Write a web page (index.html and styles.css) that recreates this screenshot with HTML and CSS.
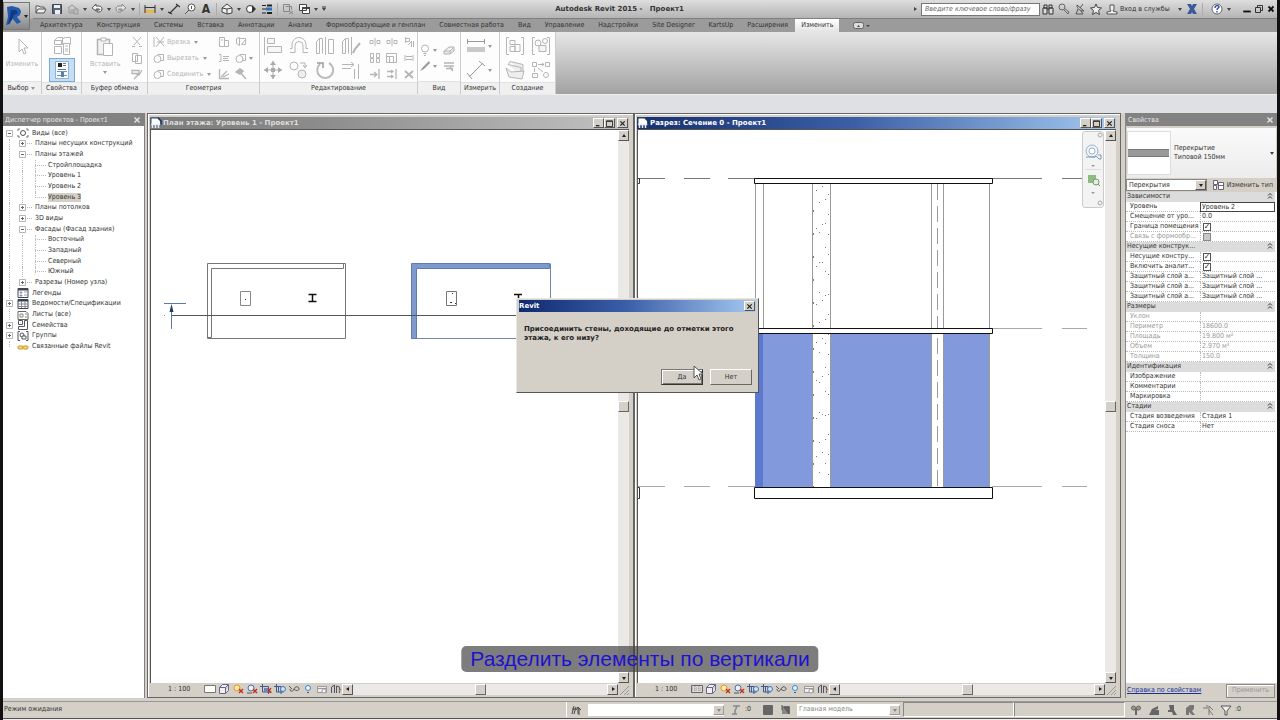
FILE: index.html
```html
<!DOCTYPE html>
<html lang="ru">

<head>
    <meta charset="UTF-8">
    <meta name="viewport" content="width=device-width, initial-scale=1.0">
    <title>Autodesk Revit 2015 - Проект1</title>
    <link rel="stylesheet" href="styles.css">
</head>

<body>
    <svg class="sprite" aria-hidden="true">
        <symbol id="down" viewBox="0 0 6 6"><path d="M1 2h4L3 5z" fill="currentColor"/></symbol>
        <symbol id="up" viewBox="0 0 6 6"><path d="M1 4h4L3 1z" fill="currentColor"/></symbol>
        <symbol id="left" viewBox="0 0 6 6"><path d="M4 1v4L1 3z" fill="currentColor"/></symbol>
        <symbol id="right" viewBox="0 0 6 6"><path d="M2 1v4l3-2z" fill="currentColor"/></symbol>
        <symbol id="cross" viewBox="0 0 8 8"><path d="M1.500 1.500l5 5M6.500 1.500l-5 5" stroke="currentColor" stroke-width="1.400"/></symbol>
        <symbol id="min" viewBox="0 0 8 8"><path d="M1 6.500h4" stroke="currentColor" stroke-width="1.500"/></symbol>
        <symbol id="max" viewBox="0 0 8 8"><path d="M.5 1h7v6.500h-7zM.5 1.500h7" stroke="currentColor" fill="none"/></symbol>
        <symbol id="chev" viewBox="0 0 6 8"><path d="M1 3.500l2-2 2 2M1 6.500l2-2 2 2" stroke="#333" fill="none"/></symbol>
        <symbol id="doc" viewBox="0 0 12 12"><path d="M1 1h8l2 3v4H1z" fill="#fff" stroke="#2a4a7c"/><path d="M1 7.500h9M2.500 8v3M5.500 8v3M8.500 8v3" stroke="#e8eef8" stroke-width="1.500"/><path d="M8 1l3 3v3" stroke="#16365f" stroke-width="1.500" fill="none"/></symbol>
        <symbol id="plus" viewBox="0 0 7 7"><path d="M.5.5h6v6h-6z" fill="#fff" stroke="#b5b5b5"/><path d="M2 3.500h3M3.500 2v3" stroke="#666"/></symbol>
        <symbol id="minus" viewBox="0 0 7 7"><path d="M.5.5h6v6h-6z" fill="#fff" stroke="#b5b5b5"/><path d="M2 3.500h3" stroke="#666"/></symbol>
        <!-- view control bar -->
        <symbol id="v-scale" viewBox="0 0 12 10"><path d="M.5 1.500h11v7H.5z" fill="#fff" stroke="#777"/></symbol>
        <symbol id="v-mesh" viewBox="0 0 12 10"><path d="M.5 1.500h11v7H.5z" fill="#ddd" stroke="#666"/><path d="M1 4h10M1 6h10M4 2v6M8 2v6" stroke="#999" stroke-dasharray="1 1"/></symbol>
        <symbol id="v-cube" viewBox="0 0 12 10"><path d="M1.500 3.500h6v6h-6zM1.500 3.500l3-3h6l-3 3M10.500.5v6l-3 3" fill="#eee" stroke="#666688"/></symbol>
        <symbol id="v-sun" viewBox="0 0 12 10"><circle cx="5" cy="4" r="3" fill="#ffe9a0" stroke="#e09a20"/><path d="M7 5l4 4M11 5L7 9" stroke="#c03020" stroke-width="1.400"/></symbol>
        <symbol id="v-shadow" viewBox="0 0 12 10"><circle cx="5" cy="4" r="3" fill="#e8f1fb" stroke="#4a6fa5"/><path d="M1 9h5" stroke="#555"/><path d="M7 5l4 4M11 5L7 9" stroke="#c03020" stroke-width="1.400"/></symbol>
        <symbol id="v-crop" viewBox="0 0 12 10"><path d="M2.500 0v8h9M0 2.500h8.500V10" fill="none" stroke="#44598a"/><path d="M4 4h4v4H4z" fill="#6a87b8"/><path d="M8 4l3 5M11 4L8 9" stroke="#c03020" stroke-width="1.300"/></symbol>
        <symbol id="v-cropv" viewBox="0 0 12 10"><path d="M2.500 0v8h7M0 2.500h7V10M4.500 3v5" fill="none" stroke="#44598a"/><circle cx="9" cy="5" r="2.500" fill="#cfe4fa" stroke="#3b78bb"/></symbol>
        <symbol id="v-glass" viewBox="0 0 12 10"><path d="M1 2l3 3M2 5c0 3 3 3 4 0 1-3 5-3 5 0 0 2-4 2-5 0" fill="none" stroke="#555"/></symbol>
        <symbol id="v-bulb" viewBox="0 0 12 10"><circle cx="6" cy="4" r="2.500" fill="#e6f4ff" stroke="#3b88cc"/><path d="M5 8.500h2" stroke="#555"/></symbol>
        <symbol id="v-temp" viewBox="0 0 12 10"><path d="M1.500 2.500h9v6h-9zM1.500 4.500h9" fill="#eee" stroke="#999"/><circle cx="8" cy="7" r="2" fill="#fff" stroke="#999"/></symbol>
        <symbol id="v-analyt" viewBox="0 0 12 10"><path d="M1.500 9V3l3-2v8M6.500 9V2l3 1v6" fill="#c3cbe0" stroke="#555"/><path d="M9 7l2-2" stroke="#d07a30" stroke-width="1.500"/></symbol>
        <!-- ribbon -->
        <symbol id="r-cut" viewBox="0 0 12 12"><path d="M2 1l7 8M10 1L3 9M1 10.500h3M8 10.500h3" fill="none" stroke="currentColor"/></symbol>
        <symbol id="r-copy" viewBox="0 0 12 12"><path d="M1.500 1.500h5v8h-5zM4.500 3.500h6v8h-6z" fill="#fff" stroke="currentColor"/></symbol>
        <symbol id="r-brush" viewBox="0 0 12 12"><path d="M1 2.500h7v3H1zM5 6l3 1 3-5M3 11l4-4" fill="none" stroke="currentColor" stroke-width="1.300"/></symbol>
        <symbol id="r-cope" viewBox="0 0 12 12"><path d="M1 1v10M3 1l8 9M11 1L3 11M4 6h7" fill="none" stroke="currentColor"/></symbol>
        <symbol id="r-join" viewBox="0 0 12 12"><circle cx="4.500" cy="7" r="3.500" fill="none" stroke="currentColor"/><path d="M4.500 2.500h6v6h-3" fill="none" stroke="currentColor"/></symbol>
        <symbol id="r-wall" viewBox="0 0 12 12"><path d="M1.500 1.500h5v9h-5zM6.500 4.500h4v6h-4M3 4h2" fill="none" stroke="currentColor"/></symbol>
        <symbol id="r-face" viewBox="0 0 12 12"><path d="M1.500 2.500l3-1v8l-3-2zM4.500 2.500h6v6h-4l4-5" fill="none" stroke="currentColor"/></symbol>
        <symbol id="r-beam" viewBox="0 0 12 12"><path d="M1 2.500h2v7H1M5 4.500h6M5 8.500h6M5 6.500h5" fill="none" stroke="currentColor"/></symbol>
        <symbol id="r-split" viewBox="0 0 12 12"><path d="M1.500 1v9.500H11M3 9l6-6M5 9l6-3" fill="none" stroke="currentColor" stroke-width="1.300"/></symbol>
        <symbol id="r-hammer" viewBox="0 0 12 12"><path d="M1 4l4-3 3 2-3 3zM5 4l6 7" fill="currentColor" stroke="currentColor" stroke-width="1.500"/></symbol>
        <symbol id="r-gap" viewBox="0 0 12 12"><path d="M1 4.500h3v3H1zM8 4.500h3v3H8zM6 2v8" fill="none" stroke="currentColor"/></symbol>
        <symbol id="r-array" viewBox="0 0 12 12"><path d="M1.500 1.500h3v4h-3zM7.500 1.500h3v4h-3zM1.500 6.500h3v4h-3zM7.500 6.500h3v4h-3z" fill="none" stroke="currentColor"/></symbol>
        <symbol id="r-scale" viewBox="0 0 12 12"><path d="M.5 1.500h10v9H.5zM3.500 4.500h4v6M.5 4.500h3v6" fill="none" stroke="currentColor"/></symbol>
        <symbol id="r-pin" viewBox="0 0 12 12"><path d="M2.500 1v6M2.500 2.500h4v3h-4M8.500 5v6M10.500 5v6M5 9l3-3" fill="none" stroke="currentColor"/></symbol>
        <symbol id="r-unpin" viewBox="0 0 12 12"><path d="M2 3v6M10 3v6M3 4.500h6M3 7.500h6" fill="none" stroke="currentColor"/></symbol>
        <symbol id="r-trim1" viewBox="0 0 12 12"><path d="M1 6.500h6M5 4l3 2.500L5 9M10 1v10" fill="none" stroke="currentColor" stroke-width="1.300"/></symbol>
        <symbol id="r-trim2" viewBox="0 0 12 12"><path d="M1 3.500h6M1 8.500h6M5 2l2 1.500L5 5M5 7l2 1.500L5 10M10 1v10" fill="none" stroke="currentColor" stroke-width="1.300"/></symbol>
        <symbol id="r-del" viewBox="0 0 12 12"><path d="M2 3l8 7M10 3l-8 7" stroke="currentColor" stroke-width="2"/></symbol>
        <symbol id="r-arrow" viewBox="0 0 20 20"><path d="M7 2v13l3-3 2 5 2-1-2-5h4z" fill="#fff" stroke="currentColor"/></symbol>
        <symbol id="r-types" viewBox="0 0 20 20"><path d="M2.500 4.500l3-3h5v7h-8zM2.500 10.500h7v7h-7zM10.500 2.500l3-1h5v7M2.500 4.500h7v4" fill="#fff" stroke="currentColor"/><path d="M11.500 7.500h6v11h-6zM13 10h3M13 13h3M13 15h3" fill="#fff" stroke="currentColor"/></symbol>
        <symbol id="r-props" viewBox="0 0 20 20"><path d="M3.500 1.500h13v17h-13z" fill="#f4faff" stroke="#8fb2d2"/><path d="M6 3h4v4H6z" fill="#222"/><path d="M11 3.500h3M11 5.500h3M6 9.500h8" stroke="#777"/><path d="M5 11.500h10M5 15.500h10" stroke="#6a97c4"/><path d="M9 12h3v5H9z" fill="#5f7f9f"/></symbol>
        <symbol id="r-paste" viewBox="0 0 20 20"><path d="M2.500 2.500h12v15h-12z" fill="#f3f3f3" stroke="currentColor" stroke-width="1.500"/><path d="M6 1h5v3H6z" fill="#fff" stroke="currentColor"/><path d="M8.500 6.500h9v12h-9z" fill="#fff" stroke="currentColor"/></symbol>
        <symbol id="r-align" viewBox="0 0 20 20"><path d="M1.500 1v18M4.500 2.500h7v5h-7zM4.500 10.500h14v6h-14z" fill="#f7f7f7" stroke="currentColor"/></symbol>
        <symbol id="r-offset" viewBox="0 0 20 20"><path d="M1 16.500h5v-7a4 4 0 0 1 8 0v7h5M1 12.500h2v-4a7 7 0 0 1 14 0v4h2" fill="none" stroke="currentColor"/></symbol>
        <symbol id="r-mirror" viewBox="0 0 20 20"><path d="M1.500 5.500l3-3v15h-3zM4.500 2.500h3v15M10.500 1v18M13.500 3.500h5v14h-5z" fill="none" stroke="currentColor"/></symbol>
        <symbol id="r-mirror2" viewBox="0 0 20 20"><path d="M1.500 5.500l3-3v15h-3zM4.500 2.500h3v15M10.500 1v18" fill="none" stroke="currentColor"/><path d="M12 17l2-4 5-6" fill="none" stroke="currentColor" stroke-width="2"/></symbol>
        <symbol id="r-move" viewBox="0 0 20 20"><path d="M10 1v18M1 10h18" stroke="#aaa"/><path d="M7 5l3-4 3 4zM7 15l3 4 3-4zM5 7l-4 3 4 3zM15 7l4 3-4 3zM8 8h4v4H8z" fill="#aaa"/></symbol>
        <symbol id="r-cp" viewBox="0 0 20 20"><circle cx="5" cy="6" r="4" fill="none" stroke="currentColor"/><circle cx="13" cy="14" r="4" fill="#eee" stroke="currentColor"/><path d="M11 3h5v4M14 5l2 3 2-3" fill="none" stroke="currentColor"/></symbol>
        <symbol id="r-rotate" viewBox="0 0 20 20"><path d="M5 4a8 8 0 1 0 9-1" fill="none" stroke="#bbb" stroke-width="2"/><path d="M2 3h6v5" fill="none" stroke="#999" stroke-width="1.500"/></symbol>
        <symbol id="r-corner" viewBox="0 0 20 20"><path d="M1 4.500h12M1 8.500h9M13.500 9v10M17.500 4v15M10 2l3 2.500L10 7" fill="none" stroke="currentColor"/></symbol>
        <symbol id="r-bulb" viewBox="0 0 12 12"><circle cx="6" cy="4.500" r="3.500" fill="#fff" stroke="currentColor"/><path d="M4.500 9.500h3M5 11.500h2" stroke="currentColor"/></symbol>
        <symbol id="r-eraser" viewBox="0 0 12 12"><path d="M1 7l5-4h5v4L7 10H1zM1 7h6l4-4M7 7v3" fill="#e5e5e5" stroke="currentColor"/></symbol>
        <symbol id="r-lines" viewBox="0 0 12 12"><path d="M1 3h10M1 6h10M3 8.500h7M7 7l3 4" stroke="currentColor" stroke-width="1.500"/></symbol>
        <symbol id="r-pen" viewBox="0 0 12 12"><path d="M1 11l3-4 6-6 1 2-6 6z" fill="#999"/></symbol>
        <symbol id="r-ruler" viewBox="0 0 20 20"><path d="M1 5.500h18M1.500 3v5M18.500 3v5" stroke="#999"/><path d="M1 11h18v5H1z" fill="#c9c9c9"/></symbol>
        <symbol id="r-dist" viewBox="0 0 20 20"><path d="M3 17L17 3M1 13l5 6M13 1l6 5" stroke="#999"/></symbol>
        <symbol id="r-group" viewBox="0 0 20 20"><path d="M4 1.500H1.500v17H4M16 1.500h2.500v17H16M5 4.500h5v4H5zM5 10.500h5v5H5zM10 8.500h5v7h-5z" fill="none" stroke="currentColor"/></symbol>
        <symbol id="r-group2" viewBox="0 0 20 20"><path d="M4 1.500H1.500v17H4M16 1.500h2.500v17H16" fill="none" stroke="currentColor"/><circle cx="7" cy="7" r="3" fill="none" stroke="currentColor"/><circle cx="14" cy="5" r="2.500" fill="none" stroke="currentColor"/><path d="M8 9.500h7v6H8z" fill="#f5f5f5" stroke="currentColor"/></symbol>
        <symbol id="r-assem" viewBox="0 0 20 20"><path d="M5 1.500l13 3v8M3 5l2-3.500M3 4.500l13 3v8" fill="#eee" stroke="currentColor"/><path d="M1 8l3 9 13 2 2-8-13 1z" fill="#eee" stroke="currentColor"/></symbol>
        <symbol id="r-similar" viewBox="0 0 20 20"><path d="M1.500 2.500h4v4h-4zM14.500 2.500h4v4h-4zM1.500 13.500h5v4h-5zM7 4.500h6M11 3l2 1.500L11 6M3.500 8v4M7 8l5 4" fill="none" stroke="currentColor"/><circle cx="15" cy="15" r="2.500" fill="none" stroke="currentColor"/></symbol>
    </svg>

    <header class="head">
        <button class="app" aria-label="Меню приложения">
            <svg width="26" height="26" viewBox="0 0 26 26"><path d="M3 4l5-1 7 2 2 3-1 4-3 2 4 5-4 2-5-6-2 6-4 1 2-8z" fill="#2459ad"/><path d="M7 7l5 0 2 3-4 2-2 5-4 4 2-8z" fill="#123a82"/><path d="M20 12h4l-2 3z" fill="#222"/></svg>
        </button>
        <div class="quick">
            <button aria-label="Открыть"><svg width="12" height="12" viewBox="0 0 12 12"><path d="M1 10V3h3l1 1h4v2M1 10l2-4h8l-2 4z" fill="#eee" stroke="#555"/></svg></button>
            <button aria-label="Сохранить"><svg width="12" height="12" viewBox="0 0 12 12"><path d="M1.500 1.500h9v9h-9z" fill="#5a6575" stroke="#3c4654"/><path d="M3 2h6v3H3zM4 7h5v4H4z" fill="#eee"/></svg></button>
            <button aria-label="Синхронизация"><svg width="12" height="12" viewBox="0 0 12 12"><path d="M1 5l4-3 4 3v5H2V5M4 10V7h2v3" fill="#ccc" stroke="#999"/><path d="M7 6h4v5H7z" fill="#bbb" stroke="#999"/></svg></button>
            <svg class="dd"><use href="#down"/></svg>
            <button aria-label="Отменить"><svg width="12" height="12" viewBox="0 0 12 12"><path d="M1 5l4-4v2h3c4 0 4 6 0 6H6V7h2c1 0 1-1 0-1H5v2z" fill="#f4f4f4" stroke="#555"/></svg></button>
            <svg class="dd"><use href="#down"/></svg>
            <button aria-label="Повторить"><svg width="12" height="12" viewBox="0 0 12 12"><path d="M11 5L7 1v2H4C0 3 0 9 4 9h2V7H4C3 7 3 6 4 6h3v2z" fill="#e2e2e2" stroke="#888"/></svg></button>
            <svg class="dd"><use href="#down"/></svg>
            <i class="qsep"></i>
            <button aria-label="Измерить"><svg width="12" height="12" viewBox="0 0 12 12"><path d="M1 7h10v3H1z" fill="#e8b84a"/><path d="M1 4.500h10M1 2v8M11 2v8" stroke="#333"/></svg></button>
            <svg class="dd"><use href="#down"/></svg>
            <button aria-label="Размер"><svg width="12" height="12" viewBox="0 0 12 12"><path d="M2 10l8-8M0 9l4 2M8 1l4 3" stroke="#333" stroke-width="1.200"/></svg></button>
            <button aria-label="Марка"><svg width="12" height="12" viewBox="0 0 12 12"><circle cx="7.500" cy="4.500" r="3.500" fill="#fff" stroke="#555"/><path d="M1 11l4-4M7.500 3v3" stroke="#555"/></svg></button>
            <button class="letter" aria-label="Текст">A</button>
            <i class="qsep"></i>
            <button aria-label="3D вид"><svg width="12" height="12" viewBox="0 0 12 12"><path d="M1 5l5-4 5 4v5l-5 1-5-2z" fill="#eee" stroke="#444"/><path d="M1 5l5 1 5-1M6 6v5" stroke="#444" fill="none"/></svg></button>
            <svg class="dd"><use href="#down"/></svg>
            <button aria-label="Разрез"><svg width="12" height="12" viewBox="0 0 12 12"><circle cx="5" cy="6" r="3.500" fill="#fff" stroke="#333"/><path d="M7 2l4 4-4 4z" fill="#333"/></svg></button>
            <button aria-label="Тонкие линии"><svg width="12" height="12" viewBox="0 0 12 12"><path d="M1 2.500h4M1 6h4M1 10h4" stroke="#222"/><path d="M6 2.500h5M6 10h5" stroke="#222" stroke-width="2"/><path d="M5 6h6" stroke="#2d6fc0" stroke-width="3"/></svg></button>
            <i class="qsep"></i>
            <button aria-label="Закрыть скрытые"><svg width="12" height="12" viewBox="0 0 12 12"><path d="M1.500 1.500h6v7h-6zM3.500 3.500h6v3M7 8l4 3M11 8l-4 3" fill="none" stroke="#888"/></svg></button>
            <button aria-label="Переключить окна"><svg width="12" height="12" viewBox="0 0 12 12"><path d="M1.500 1.500h7v6h-7zM4.500 4.500h7v6h-7z" fill="#fff" stroke="#444"/><path d="M4 5h8" stroke="#444" stroke-width="2"/></svg></button>
            <svg class="dd"><use href="#down"/></svg>
            <svg class="dd wide"><use href="#down"/><path d="M1 1h4" stroke="#333"/></svg>
            <h1 class="apptitle">Autodesk Revit 2015 - &nbsp; Проект1</h1>
            <div class="info">
                <svg class="dd"><use href="#right"/></svg>
                <input class="search" type="text" aria-label="Поиск" placeholder="Введите ключевое слово/фразу">
                <button aria-label="Найти"><svg width="12" height="12" viewBox="0 0 12 12"><path d="M2 2h3v3H2zM7 2h3v3H7zM1 5h4v6H1zM7 5h4v6H7zM5 6h2" fill="#ddd" stroke="#333"/></svg></button>
                <button aria-label="Подписка"><svg width="12" height="12" viewBox="0 0 12 12"><circle cx="4" cy="4" r="3" fill="none" stroke="#666"/><path d="M5 6l5 5 1-2-5-4" fill="none" stroke="#666"/></svg></button>
                <button aria-label="Связь"><svg width="12" height="12" viewBox="0 0 12 12"><path d="M3 2c0 4 3 6 7 6M3 2l7 6M6 5l3-4M4 6l-2 5h7L7 8" fill="none" stroke="#555"/></svg></button>
                <button aria-label="Избранное"><svg width="12" height="12" viewBox="0 0 12 12"><path d="M6 1l1.500 3.500 4 .5-3 2.500 1 4L6 9.500l-3.500 2 1-4-3-2.500 4-.5z" fill="#eee" stroke="#444"/></svg></button>
                <button aria-label="Профиль"><svg width="12" height="12" viewBox="0 0 12 12"><path d="M4 2h4v4l-1 2 4 1v2H1V9l4-1-1-2z" fill="#eee" stroke="#555"/></svg></button>
                <a class="signin" href="#">Вход в службы</a>
                <svg class="dd"><use href="#down"/></svg>
                <button class="exch" aria-label="Exchange"><svg width="12" height="12" viewBox="0 0 12 12"><path d="M1 1h4l1 2 1-2h4L8 6l3 5H7L6 9l-1 2H1l3-5z" fill="#3a5a9a"/></svg></button>
                <i class="qsep"></i>
                <button class="help" aria-label="Справка"><svg width="12" height="12" viewBox="0 0 12 12"><circle cx="6" cy="6" r="5" fill="#fff" stroke="#666"/><path d="M4 5c0-3 4-3 4-1 0 1-2 1-2 3M6 8v1.500" fill="none" stroke="#2a4fb0" stroke-width="1.400"/></svg></button>
                <svg class="dd"><use href="#down"/></svg>
                <span class="sys">
                    <button aria-label="Свернуть"><svg width="10" height="10" viewBox="0 0 8 8"><path d="M1 6h6" stroke="#111" stroke-width="1.500"/></svg></button>
                    <button aria-label="Восстановить"><svg width="10" height="10" viewBox="0 0 10 10"><path d="M1.500 3.500h5v5h-5zM3.500 3V1.500h5v5H7" fill="none" stroke="#333"/></svg></button>
                    <button aria-label="Закрыть"><svg width="10" height="10" viewBox="0 0 8 8"><path d="M2 2l4 4M6 2L2 6" stroke="#111" stroke-width="1.500"/></svg></button>
                </span>
            </div>
        </div>
        <nav class="tabs">
            <a href="#">Архитектура</a>
            <a href="#">Конструкция</a>
            <a href="#">Системы</a>
            <a href="#">Вставка</a>
            <a href="#">Аннотации</a>
            <a href="#">Анализ</a>
            <a href="#">Формообразующие и генплан</a>
            <a href="#">Совместная работа</a>
            <a href="#">Вид</a>
            <a href="#">Управление</a>
            <a href="#">Надстройки</a>
            <a href="#">Site Designer</a>
            <a href="#">KartsUp</a>
            <a href="#">Расширения</a>
            <a href="#" class="on">Изменить</a>
            <button class="fold" aria-label="Свернуть ленту"><svg width="18" height="8" viewBox="0 0 18 8"><rect x=".5" y=".5" width="10" height="6" rx="2" fill="#ddd" stroke="#666"/><path d="M4 5l1.500-2L7 5zM13 3h4l-2 2z" fill="#444"/></svg></button>
        </nav>
    </header>

    <section class="ribbon">
        <div class="panel p-select">
            <div class="tools">
                <button class="big"><svg width="20" height="20"><use href="#r-arrow"/></svg>Изменить</button>
            </div>
            <h2>Выбор <svg class="dd"><use href="#down"/></svg></h2>
        </div>
        <div class="panel p-props">
            <div class="tools stack">
                <button aria-label="Типоразмер"><svg width="22" height="22"><use href="#r-types"/></svg></button>
                <button class="pressed" aria-label="Свойства"><svg width="20" height="20"><use href="#r-props"/></svg></button>
            </div>
            <h2>Свойства</h2>
        </div>
        <div class="panel p-clip">
            <div class="tools">
                <button class="big"><svg width="20" height="20"><use href="#r-paste"/></svg>Вставить<svg class="dd"><use href="#down"/></svg></button>
                <div class="three">
                    <button aria-label="Вырезать"><svg><use href="#r-cut"/></svg></button>
                    <button aria-label="Копировать"><svg><use href="#r-copy"/></svg></button>
                    <button aria-label="Копировать свойства"><svg><use href="#r-brush"/></svg></button>
                </div>
            </div>
            <h2>Буфер обмена</h2>
        </div>
        <div class="panel p-geom">
            <div class="tools">
                <div class="three named">
                    <button><svg><use href="#r-cope"/></svg>Врезка<svg class="dd"><use href="#down"/></svg></button>
                    <button><svg><use href="#r-join"/></svg>Вырезать<svg class="dd"><use href="#down"/></svg></button>
                    <button><svg><use href="#r-join"/></svg>Соединить<svg class="dd"><use href="#down"/></svg></button>
                </div>
                <div class="three">
                    <button aria-label="Соединение крыши"><svg><use href="#r-wall"/></svg></button>
                    <button aria-label="Балки"><svg><use href="#r-beam"/></svg></button>
                    <button aria-label="Стены"><svg><use href="#r-split"/></svg></button>
                </div>
                <div class="three">
                    <button aria-label="Грань"><svg><use href="#r-face"/></svg></button>
                    <button aria-label="Краска"><svg><use href="#r-join"/></svg></button>
                    <button aria-label="Снос"><svg><use href="#r-hammer"/></svg></button>
                </div>
                <svg class="dd paint"><use href="#down"/></svg>
            </div>
            <h2>Геометрия</h2>
        </div>
        <div class="panel p-edit">
            <div class="tools">
                <div class="grid4">
                    <button aria-label="Выровнять"><svg><use href="#r-align"/></svg></button>
                    <button aria-label="Сместить"><svg><use href="#r-offset"/></svg></button>
                    <button aria-label="Зеркало"><svg><use href="#r-mirror"/></svg></button>
                    <button aria-label="Зеркало по оси"><svg><use href="#r-mirror2"/></svg></button>
                    <button aria-label="Перенести"><svg><use href="#r-move"/></svg></button>
                    <button aria-label="Копия"><svg><use href="#r-cp"/></svg></button>
                    <button aria-label="Повернуть"><svg><use href="#r-rotate"/></svg></button>
                    <button aria-label="Угол"><svg><use href="#r-corner"/></svg></button>
                </div>
                <div class="grid3">
                    <button aria-label="Разделить"><svg><use href="#r-gap"/></svg></button>
                    <button aria-label="Разделить с зазором"><svg><use href="#r-gap"/></svg></button>
                    <button aria-label="Открепить"><svg><use href="#r-pin"/></svg></button>
                    <button aria-label="Массив"><svg><use href="#r-array"/></svg></button>
                    <button aria-label="Масштаб"><svg><use href="#r-scale"/></svg></button>
                    <button aria-label="Закрепить"><svg><use href="#r-unpin"/></svg></button>
                    <button aria-label="Обрезать"><svg><use href="#r-trim1"/></svg></button>
                    <button aria-label="Обрезать несколько"><svg><use href="#r-trim2"/></svg></button>
                    <button aria-label="Удалить"><svg><use href="#r-del"/></svg></button>
                </div>
            </div>
            <h2>Редактирование</h2>
        </div>
        <div class="panel p-view">
            <div class="tools two">
                <button aria-label="Скрыть"><svg><use href="#r-bulb"/></svg><svg class="dd"><use href="#down"/></svg></button>
                <button aria-label="Вытеснить"><svg><use href="#r-eraser"/></svg></button>
                <button aria-label="Графика"><svg><use href="#r-pen"/></svg><svg class="dd"><use href="#down"/></svg></button>
                <button aria-label="Линии"><svg><use href="#r-lines"/></svg></button>
            </div>
            <h2>Вид</h2>
        </div>
        <div class="panel p-meas">
            <div class="tools stack">
                <button aria-label="Измерить"><svg width="20" height="20"><use href="#r-ruler"/></svg><svg class="dd"><use href="#down"/></svg></button>
                <button aria-label="Размер"><svg width="20" height="20"><use href="#r-dist"/></svg><svg class="dd"><use href="#down"/></svg></button>
            </div>
            <h2>Измерить</h2>
        </div>
        <div class="panel p-make">
            <div class="tools grid2">
                <button aria-label="Создать группу"><svg><use href="#r-group"/></svg></button>
                <button aria-label="Создать похожий"><svg><use href="#r-group2"/></svg></button>
                <button aria-label="Сборка"><svg><use href="#r-assem"/></svg></button>
                <button aria-label="Части"><svg><use href="#r-similar"/></svg></button>
            </div>
            <h2>Создание</h2>
        </div>
    </section>

    <main class="work">
        <aside class="dock browser">
            <header class="dockhead">Диспетчер проектов - Проект1<button aria-label="Закрыть"><svg width="8" height="8"><use href="#cross"/></svg></button></header>
            <ul class="tree">
                <li><svg class="box"><use href="#minus"/></svg><svg class="ic" viewBox="0 0 12 10"><path d="M1 3V1h2M9 1h2v2M1 7v2h2M9 9h2V7" fill="none" stroke="#777"/><circle cx="6" cy="5" r="2.500" fill="#fff" stroke="#555"/></svg>Виды (все)</li>
                <li><i class="v"></i><svg class="box"><use href="#plus"/></svg><i class="h"></i>Планы несущих конструкций</li>
                <li><i class="v"></i><svg class="box"><use href="#minus"/></svg><i class="h"></i>Планы этажей</li>
                <li><i class="v"></i><i class="v"></i><i class="v"></i><i class="h long"></i>Стройплощадка</li>
                <li><i class="v"></i><i class="v"></i><i class="v"></i><i class="h long"></i>Уровень 1</li>
                <li><i class="v"></i><i class="v"></i><i class="v"></i><i class="h long"></i>Уровень 2</li>
                <li><i class="v"></i><i class="v"></i><i class="v last"></i><i class="h long"></i><b>Уровень 3</b></li>
                <li><i class="v"></i><svg class="box"><use href="#plus"/></svg><i class="h"></i>Планы потолков</li>
                <li><i class="v"></i><svg class="box"><use href="#plus"/></svg><i class="h"></i>3D виды</li>
                <li><i class="v"></i><svg class="box"><use href="#minus"/></svg><i class="h"></i>Фасады (Фасад здания)</li>
                <li><i class="v"></i><i class="v"></i><i class="v"></i><i class="h long"></i>Восточный</li>
                <li><i class="v"></i><i class="v"></i><i class="v"></i><i class="h long"></i>Западный</li>
                <li><i class="v"></i><i class="v"></i><i class="v"></i><i class="h long"></i>Северный</li>
                <li><i class="v"></i><i class="v"></i><i class="v last"></i><i class="h long"></i>Южный</li>
                <li><i class="v"></i><svg class="box"><use href="#plus"/></svg><i class="h"></i>Разрезы (Номер узла)</li>
                <li><i class="v"></i><svg class="ic" viewBox="0 0 12 10"><path d="M1 .5h10v9H1z" fill="#fff" stroke="#445"/><path d="M1 1.500h10" stroke="#445" stroke-width="2"/><path d="M3 4h2v1H3zM3 7h2v1H3zM7 4h3M7 7h3" fill="#347" stroke="#99a"/></svg>Легенды</li>
                <li><svg class="box"><use href="#plus"/></svg><svg class="ic" viewBox="0 0 12 10"><path d="M1 .5h10v9H1z" fill="#fff" stroke="#445"/><path d="M1 1.500h10" stroke="#345" stroke-width="2"/><path d="M1 5h10M1 7.500h10M4.500 2v7M8 2v7" stroke="#889"/></svg>Ведомости/Спецификации</li>
                <li><i class="v"></i><svg class="ic" viewBox="0 0 12 10"><path d="M1 1.500h8l2 2v6H1z" fill="#fff" stroke="#666"/><path d="M3 4h3v3H3zM8 4h2M8 7h2" fill="none" stroke="#888"/></svg>Листы (все)</li>
                <li><svg class="box"><use href="#plus"/></svg><svg class="ic" viewBox="0 0 12 10"><path d="M1.500.5h4v4h-4zM7.500.5h3v9h-9v-3h6z" fill="#fff" stroke="#556"/></svg>Семейства</li>
                <li><svg class="box"><use href="#plus"/></svg><svg class="ic" viewBox="0 0 12 10"><path d="M3 .5H1v9h2M9 .5h2v9H9" fill="none" stroke="#556"/><circle cx="5" cy="4" r="2" fill="none" stroke="#556"/><path d="M5 5h4v3H5z" fill="#fff" stroke="#556"/></svg>Группы</li>
                <li><i class="v last"></i><svg class="ic" viewBox="0 0 12 10"><rect x="1" y="4" width="5" height="3" rx="1" fill="#f5d870" stroke="#c9982a"/><rect x="6" y="4" width="5" height="3" rx="1" fill="#f5d870" stroke="#c9982a"/></svg>Связанные файлы Revit</li>
            </ul>
        </aside>

        <section class="mdi">
            <article class="win">
                <header class="wintitle"><svg width="12" height="12"><use href="#doc"/></svg><span>План этажа: Уровень 1 - Проект1</span>
                    <button aria-label="Свернуть"><svg><use href="#min"/></svg></button><button aria-label="Развернуть"><svg><use href="#max"/></svg></button><button class="x" aria-label="Закрыть"><svg><use href="#cross"/></svg></button>
                </header>
                <div class="view">
                    <svg class="canvas">
                        <g fill="none" stroke="#777">
                            <path d="M56.500 133.500h138v75h-138z"/>
                            <path d="M60.500 207.500v-69h132M192.500 133.500v5M56.500 207.500h4"/>
                            <path d="M89.500 161.500h10v14h-10z" stroke="#888"/>
                            <path d="M295.500 161.500h10v14h-10z"/>
                        </g>
                        <path d="M94 169h1v1h-1zM301 163h1v1h-1zM299 172h2v1h-2zM304 173h1v1h-1z" fill="#333"/>
                        <path d="M157.500 164.500h8M161.500 164.500v7M157.500 171.500h8" stroke="#111" stroke-width="1.500"/>
                        <path d="M363 164.500h8M367.500 164.500v7" stroke="#111" stroke-width="1.500"/>
                        <path d="M399.500 133.500v75H260.500" fill="none" stroke="#7086ad"/>
                        <path d="M260.500 133.500h138v5h-133v70h-5z" fill="#8099cb" stroke="#5c7bbd"/>
                        <path d="M20 185.500h370" stroke="#555"/>
                        <path d="M13 173.500h22M20.500 181v18" stroke="#5b7ba3"/>
                        <path d="M20.500 174l2 8h-4z" fill="#1e3c66"/>
                        <path d="M13 185.500h1" stroke="#79a"/>
                    </svg>
                    <div class="vbar"><button aria-label="Вверх"><svg><use href="#up"/></svg></button><div><i></i></div><button aria-label="Вниз"><svg><use href="#down"/></svg></button></div>
                </div>
                <footer class="viewctl">
                    <span>1 : 100</span>
                    <svg><use href="#v-scale"/></svg><svg><use href="#v-cube"/></svg><svg><use href="#v-sun"/></svg><svg><use href="#v-shadow"/></svg><svg><use href="#v-crop"/></svg><svg><use href="#v-cropv"/></svg><svg><use href="#v-glass"/></svg><svg><use href="#v-bulb"/></svg><svg><use href="#v-temp"/></svg><svg><use href="#v-analyt"/></svg>
                    <div class="hbar"><button aria-label="Влево"><svg><use href="#left"/></svg></button><div><i></i></div><button aria-label="Вправо"><svg><use href="#right"/></svg></button></div>
                    <svg class="grip" viewBox="0 0 11 11"><path d="M2 11l9-9M6 11l5-5M9 11l2-2" stroke="#999"/></svg>
                </footer>
            </article>

            <article class="win front">
                <header class="wintitle"><svg width="12" height="12"><use href="#doc"/></svg><span>Разрез: Сечение 0 - Проект1</span>
                    <button aria-label="Свернуть"><svg><use href="#min"/></svg></button><button aria-label="Развернуть"><svg><use href="#max"/></svg></button><button class="x" aria-label="Закрыть"><svg><use href="#cross"/></svg></button>
                </header>
                <div class="view">
                    <svg class="canvas">
                        <path d="M0 48.500h27M46 48.500h26M90 48.500h28M354 48.500h50M424 48.500h25" stroke="#777"/>
                        <path d="M354 198.500h50M424 198.500h25M0 356.500h27M46 356.500h26M90 356.500h28M354 356.500h50M424 356.500h25" stroke="#aaa"/>
                        <path d="M0 48.500h1.500v5H0M0 357.500h1.500v11H0" fill="none" stroke="#333"/>
                        <path d="M117 204h58v153h-58zM193 204h100v153h-100zM305 204h46v153h-46z" fill="#829adc"/>
                        <path d="M117 204h8v153h-8z" fill="#5b79cf"/>
                        <g stroke="#9a9a9a">
                            <path d="M117.500 54v150M125.500 54v150M174.500 54v303M192.500 54v303M293.500 54v303M305.500 54v303M351.500 54v303"/>
                            <path d="M299.500 54v303" stroke-dasharray="16 6"/>
                        </g>
                        <path d="M125 53.500h58" stroke="#222"/>
                        <g fill="none" stroke="#777" stroke-dasharray="1 37">
                            <path d="M178.500 60v297"/><path d="M181.500 72v285" stroke-dasharray="1 29"/><path d="M184.500 56v301"/><path d="M187.500 69v288" stroke-dasharray="1 23"/><path d="M190.500 64v293" stroke-dasharray="1 19"/><path d="M175.500 80v277" stroke-dasharray="2 21"/>
                        </g>
                        <g fill="#fff" stroke="#111">
                            <path d="M116.500 48.500h238v5h-238zM116.500 198.500h238v5h-238z"/>
                            <path d="M116.500 357.500h238v11h-238z"/>
                        </g>
                    </svg>
                    <div class="navbar">
                        <svg width="20" height="75" viewBox="0 0 20 75"><circle cx="17" cy="3" r="2" fill="none" stroke="#aaa"/><circle cx="17" cy="71" r="2" fill="none" stroke="#aaa"/><circle cx="9" cy="19" r="6" fill="#eef3f9" stroke="#9db1c9"/><circle cx="9" cy="19" r="3" fill="#fff" stroke="#9db1c9"/><path d="M3 25h8M11 26l2-2 3 3h2v-4h-3" fill="none" stroke="#7d97b5"/><path d="M8 33h4l-2 2zM8 60h4l-2 2z" fill="#999"/><path d="M2 37.500h16" stroke="#ddd"/><path d="M5 43h8v8H5z" fill="#8dbb80"/><circle cx="13" cy="50" r="3" fill="#e4efe0" stroke="#7a9a78"/><path d="M15 52l2 2" stroke="#7a9a78"/></svg>
                    </div>
                    <div class="vbar"><button aria-label="Вверх"><svg><use href="#up"/></svg></button><div><i></i></div><button aria-label="Вниз"><svg><use href="#down"/></svg></button></div>
                </div>
                <footer class="viewctl">
                    <span>1 : 100</span>
                    <svg><use href="#v-mesh"/></svg><svg><use href="#v-cube"/></svg><svg><use href="#v-sun"/></svg><svg><use href="#v-shadow"/></svg><svg><use href="#v-cropv"/></svg><svg><use href="#v-cropv"/></svg><svg><use href="#v-glass"/></svg><svg><use href="#v-bulb"/></svg><svg><use href="#v-temp"/></svg><svg><use href="#v-analyt"/></svg>
                    <div class="hbar"><button aria-label="Влево"><svg><use href="#left"/></svg></button><div><i></i></div><button aria-label="Вправо"><svg><use href="#right"/></svg></button></div>
                    <svg class="grip" viewBox="0 0 11 11"><path d="M2 11l9-9M6 11l5-5M9 11l2-2" stroke="#999"/></svg>
                </footer>
            </article>
        </section>

        <aside class="dock props">
            <header class="dockhead">Свойства<button aria-label="Закрыть"><svg width="8" height="8"><use href="#cross"/></svg></button></header>
            <button class="type">
                <span class="thumb"><i></i></span>
                <span class="typename">Перекрытие<br>Типовой 150мм</span>
                <svg class="dd"><use href="#down"/></svg>
            </button>
            <div class="filter">
                <span class="combo"><select aria-label="Категория"><option>Перекрытия</option></select><i><svg><use href="#down"/></svg></i></span>
                <button class="edittype"><svg width="12" height="10" viewBox="0 0 12 10"><path d="M1.500.5h4v4h-4zM1.500 5.500h3v4h-3zM6.500 2.500h5v7h-5zM6.500 5.500h5" fill="#fff" stroke="#667"/></svg>Изменить тип</button>
            </div>
            <div class="sheet">
                <table>
                    <colgroup><col class="name"><col></colgroup>
                    <tr class="g"><th colspan="2">Зависимости<svg><use href="#chev"/></svg></th></tr>
                    <tr><td>Уровень</td><td class="focus">Уровень 2</td></tr>
                    <tr><td>Смещение от уро...</td><td>0.0</td></tr>
                    <tr><td><label for="room">Граница помещения</label></td><td><input type="checkbox" id="room" checked></td></tr>
                    <tr class="off"><td><label for="mass">Связь с формообр...</label></td><td><input type="checkbox" id="mass" disabled></td></tr>
                    <tr class="g"><th colspan="2">Несущие конструк...<svg><use href="#chev"/></svg></th></tr>
                    <tr><td><label for="struct">Несущие констру...</label></td><td><input type="checkbox" id="struct" checked></td></tr>
                    <tr><td><label for="analyt">Включить аналит...</label></td><td><input type="checkbox" id="analyt" checked></td></tr>
                    <tr><td>Защитный слой а...</td><td>Защитный слой ...</td></tr>
                    <tr><td>Защитный слой а...</td><td>Защитный слой ...</td></tr>
                    <tr><td>Защитный слой а...</td><td>Защитный слой ...</td></tr>
                    <tr class="g"><th colspan="2">Размеры<svg><use href="#chev"/></svg></th></tr>
                    <tr class="off"><td>Уклон</td><td></td></tr>
                    <tr class="off"><td>Периметр</td><td>18600.0</td></tr>
                    <tr class="off"><td>Площадь</td><td>19.800 м²</td></tr>
                    <tr class="off"><td>Объем</td><td>2.970 м³</td></tr>
                    <tr class="off"><td>Толщина</td><td>150.0</td></tr>
                    <tr class="g"><th colspan="2">Идентификация<svg><use href="#chev"/></svg></th></tr>
                    <tr><td>Изображение</td><td></td></tr>
                    <tr><td>Комментарии</td><td></td></tr>
                    <tr><td>Маркировка</td><td></td></tr>
                    <tr class="g"><th colspan="2">Стадии<svg><use href="#chev"/></svg></th></tr>
                    <tr><td>Стадия возведения</td><td>Стадия 1</td></tr>
                    <tr><td>Стадия сноса</td><td>Нет</td></tr>
                </table>
            </div>
            <footer class="propfoot"><a href="#">Справка по свойствам</a><button disabled>Применить</button></footer>
        </aside>
    </main>

    <footer class="status">
        <span class="msg">Режим ожидания</span>
        <svg class="si" viewBox="0 0 12 12"><path d="M4 2L2 10M6 3L4 10M2 5h3M8 10V4M6 6l2-3 3 3M9 4v7" fill="none" stroke="#444"/></svg>
        <span class="combo set"><select aria-label="Рабочий набор"><option></option></select><i><svg><use href="#down"/></svg></i></span>
        <svg class="si" viewBox="0 0 12 12"><path d="M3 2h7M7 2L5 7M2 10h5M5 6v4" fill="none" stroke="#888" stroke-width="1.500"/></svg><span class="num">:0</span>
        <svg class="si" viewBox="0 0 12 12"><rect x="1" y="1" width="10" height="10" rx="1" fill="#666"/></svg>
        <svg class="si" viewBox="0 0 12 12"><path d="M2 2h8v8H2z" fill="#888"/><path d="M2 1v5M4 3l5 7V3z" fill="#666" stroke="#555"/></svg>
        <span class="combo model"><select aria-label="Вариант конструкции"><option>Главная модель</option></select><i><svg><use href="#down"/></svg></i></span>
        <span class="cell"></span>
        <span class="cell"></span>
        <span class="picks">
            <svg class="si" viewBox="0 0 12 12"><path d="M6 5v6" stroke="#666" stroke-width="2"/><circle cx="3.500" cy="4" r="2" fill="#999" stroke="#666"/><circle cx="8.500" cy="4" r="2" fill="#999" stroke="#666"/></svg>
            <svg class="si" viewBox="0 0 12 12"><path d="M1 11l3-6 6-3v3l-3 1h4v5H6z" fill="#666"/></svg>
            <svg class="si" viewBox="0 0 12 12"><path d="M3 1h5v5l3 5H7l-1-3H2V6h2z" fill="#666"/></svg>
            <svg class="si" viewBox="0 0 12 12"><path d="M2 4l4-3h4v4l-2 2 3 4H8L5 8v3H2z" fill="#777"/></svg>
            <svg class="si" viewBox="0 0 12 12"><path d="M1 4h3M5 1v4M7 6l4 5M7 11V2l4 4" fill="none" stroke="#777"/></svg>
            <svg class="si" viewBox="0 0 12 12"><path d="M1 2h10L7 7v4H5V7z" fill="#eee" stroke="#555"/></svg><span class="num">:0</span>
        </span>
    </footer>

    <div class="dialog" role="dialog" aria-labelledby="dlgtitle">
        <header><span id="dlgtitle">Revit</span><button aria-label="Закрыть"><svg><use href="#cross"/></svg></button></header>
        <p>Присоединить стены, доходящие до отметки этого этажа, к его низу?</p>
        <div class="answers"><button class="default">Да</button><button>Нет</button></div>
        <svg class="cursor" viewBox="0 0 12 17"><path d="M1 1v12l3-3 2 5 2-1-2-5h4z" fill="#fff" stroke="#555"/></svg>
    </div>

    <div class="caption">Разделить элементы по вертикали</div>
</body>

</html>
```
FILE: styles.css
```css
* {
    box-sizing: border-box;
}

body {
    margin: 0;
    height: 100vh;
    display: flex;
    flex-direction: column;
    overflow: hidden;
    border: solid #111;
    border-width: 0 3px;
    background: #dfe0e3;
    color: #333;
    font-family: "DejaVu Sans Condensed", "DejaVu Sans", sans-serif;
    font-size: 7px;
    line-height: 9px;
}

h1, h2, p, ul {
    margin: 0;
    padding: 0;
}

button, input, select {
    margin: 0;
    padding: 0;
    border: 0;
    background: none;
    color: inherit;
    font: inherit;
}

a {
    color: inherit;
    text-decoration: none;
}

svg {
    display: block;
    flex: none;
}

.sprite {
    width: 0;
    height: 0;
    position: absolute;
}

.dd {
    width: 6px;
    height: 6px;
    margin: 0 1px;
    color: #444;
}

/* title bar and tabs */

.head {
    display: grid;
    grid-template-columns: 30px 1fr;
    grid-template-rows: 19px 13px;
    background: linear-gradient(#dedede, #b2b2b2 19px, #9b9b9b 19px);
}

.app {
    grid-row: 1 / 3;
    margin: 2px 3px 2px 0;
    background: linear-gradient(#cfd0d2, #85878a);
    border: 1px solid #777;
}

.quick {
    display: flex;
    align-items: center;
    border-bottom: 1px solid #808080;
    min-width: 0;
}

.quick button {
    width: 16px;
    display: flex;
    justify-content: center;
    flex: none;
}

.quick .letter {
    font-size: 12px;
    font-weight: bold;
    line-height: 12px;
}

.qsep {
    width: 1px;
    height: 12px;
    margin: 0 2px;
    background: #aaa;
}

.apptitle,
.wintitle,
.dialog header,
.dialog p {
    font-family: "DejaVu Sans", sans-serif;
    font-weight: bold;
}

.apptitle {
    flex: 1;
    font-size: 7px;
    text-align: center;
    white-space: pre;
}

.info {
    display: flex;
    align-items: center;
}

.search {
    width: 119px;
    height: 13px;
    margin-left: 2px;
    padding: 0 3px;
    border: 1px solid #777;
    background: #fff;
}

.search::placeholder {
    color: #666;
    font-style: italic;
}

.signin {
    width: 56px;
    white-space: nowrap;
}

.quick .help {
    margin-left: 4px;
}

.sys {
    display: flex;
    margin-left: 8px;
}

.quick .sys button {
    width: 12px;
}

.tabs {
    display: flex;
    align-items: stretch;
    line-height: 13px;
    white-space: nowrap;
}

.tabs a {
    padding: 0 7px;
}

.tabs .on {
    padding: 0 6px;
    background: linear-gradient(#fff, #e4e4e4);
}

.fold {
    padding-left: 14px;
}

/* ribbon */

.ribbon {
    display: flex;
    height: 63px;
    background: linear-gradient(#e6e6e6, #a2a2a2);
    border-bottom: 1px solid #eee;
}

.panel {
    display: flex;
    flex-direction: column;
    background: #fdfdfd;
    border-right: 1px solid #ccc;
    color: #b5b5b5;
}

.panel h2 {
    height: 13px;
    display: flex;
    justify-content: center;
    align-items: center;
    font-size: 7px;
    font-weight: normal;
    color: #333;
    background: #f0f0f0;
    border-top: 1px solid #e2e2e2;
    white-space: nowrap;
}

.panel .dd {
    color: #999;
}

.tools {
    flex: 1;
    display: flex;
    justify-content: center;
    padding-top: 2px;
}

.tools svg:not(.dd) {
    width: 12px;
    height: 12px;
}

.tools button {
    display: flex;
    align-items: center;
    justify-content: center;
    white-space: nowrap;
}

.tools .big {
    flex-direction: column;
    justify-content: flex-start;
    padding-top: 3px;
}

.tools .big svg:not(.dd),
.stack svg:not(.dd),
.grid4 svg:not(.dd),
.grid2 svg:not(.dd) {
    width: 20px;
    height: 20px;
}

.big svg:first-child {
    margin-bottom: 3px;
}

.three {
    display: grid;
    grid-template-rows: repeat(3, 16px);
}

.three.named button {
    justify-content: flex-start;
    gap: 2px;
}

.stack {
    flex-direction: column;
    align-items: center;
    justify-content: space-between;
}

.stack button {
    height: 24px;
}

.pressed {
    width: 26px;
    background: #c5def3;
    border: 1px solid #79a9d6;
}

.p-select { width: 39px; }
.p-props { width: 40px; }
.p-clip { width: 66px; }
.p-geom { width: 112px; }
.p-edit { width: 158px; }
.p-view { width: 43px; }
.p-meas { width: 39px; }
.p-make { width: 56px; }

.p-clip .tools {
    justify-content: space-between;
    padding-left: 8px;
    padding-right: 4px;
}

.p-geom .tools {
    gap: 5px;
    padding-left: 5px;
    justify-content: flex-start;
}

.p-geom .paint {
    align-self: center;
    margin-left: -4px;
}

.named {
    width: 60px;
}

.p-edit .tools {
    justify-content: space-between;
}

.grid4 {
    display: grid;
    grid-template: repeat(2, 24px) / repeat(4, 26px);
}

.grid3 {
    display: grid;
    grid-template: repeat(3, 16px) / repeat(3, 17px);
}

.grid2 {
    display: grid;
    grid-template: repeat(2, 24px) / repeat(2, 26px);
}

.two {
    display: grid;
    grid-template: repeat(2, 16px) / repeat(2, 20px);
    padding-top: 10px;
}

/* work area */

.work {
    flex: 1;
    min-height: 0;
    display: flex;
    margin-top: 18px;
    padding-bottom: 3px;
    background: #d4d0c8;
}

.dock {
    display: flex;
    flex-direction: column;
    border-top: 1px solid #808080;
}

.browser {
    width: 142px;
    background: #fff;
    border-right: 1px solid #808080;
}

.dockhead {
    height: 12px;
    display: flex;
    align-items: center;
    justify-content: space-between;
    flex: none;
    padding: 0 3px 0 2px;
    background: #828282;
    color: #e6e6e6;
    white-space: nowrap;
}

.tree {
    list-style: none;
    display: grid;
    grid-auto-rows: 1fr;
    height: 224px;
    margin-top: 2px;
    padding-left: 3px;
}

.tree li {
    display: flex;
    align-items: center;
    white-space: nowrap;
}

.tree b {
    font-weight: normal;
    background: #d4d0c8;
}

.box {
    width: 7px;
    height: 7px;
    margin-right: 3px;
}

.ic {
    width: 12px;
    height: 10px;
    margin: 0 3px 0 1px;
}

.v {
    align-self: stretch;
    width: 7px;
    margin-left: 3px;
    border-left: 1px dotted #bbb;
}

.v + .box {
    margin-left: 3px;
}

.v + .v {
    margin-left: 6px;
}

.v.last {
    align-self: flex-start;
    height: 6px;
}

.h {
    width: 5px;
    margin: 0 3px 0 -2px;
    border-top: 1px dotted #bbb;
}

.h.long {
    width: 11px;
    margin: 0 2px 0 -7px;
}

.mdi {
    flex: 1;
    display: flex;
    min-width: 0;
    padding: 0 4px 0 2px;
}

.win {
    flex: 1;
    min-width: 0;
    display: flex;
    flex-direction: column;
    padding: 3px 4px 2px 2px;
    border: 1px solid #666;
    background: #d4d0c8;
    box-shadow: inset 1px 1px #fff;
}

.wintitle {
    height: 12px;
    display: flex;
    align-items: center;
    flex: none;
    padding-right: 1px;
    background: linear-gradient(90deg, #7b7b7b, #8c8c8c 35%, #c2c2c2);
    color: #ddd;
    white-space: nowrap;
}

.front .wintitle {
    background: linear-gradient(90deg, #16306f, #3b5fa6 45%, #a6caf0);
    color: #fff;
}

.wintitle span {
    flex: 1;
    padding-left: 1px;
}

.wintitle button,
.dialog header button,
.vbar button,
.hbar button,
.combo i {
    width: 11px;
    height: 10px;
    display: flex;
    align-items: center;
    justify-content: center;
    flex: none;
    background: #d4d0c8;
    border: 1px solid;
    border-color: #fff #555 #555 #fff;
    color: #222;
}

.wintitle button svg,
.dialog header svg {
    width: 7px;
    height: 7px;
}

.wintitle .x {
    margin-left: 2px;
}

.view {
    flex: 1;
    min-height: 0;
    display: flex;
    position: relative;
    background: #fff;
    border: solid #555;
    border-width: 1px 0 0 1px;
}

.canvas {
    flex: 1;
    min-width: 0;
    height: 100%;
}

.vbar {
    width: 11px;
    display: flex;
    flex-direction: column;
    background: #ebe9e6;
}

.vbar button,
.hbar button {
    width: 11px;
    height: 11px;
}

.vbar div,
.hbar div {
    flex: 1;
    display: flex;
    align-items: center;
    justify-content: center;
}

.vbar i,
.hbar i {
    width: 11px;
    height: 11px;
    background: #d4d0c8;
    border: 1px solid;
    border-color: #fff #666 #666 #fff;
}

.vbar svg,
.hbar svg,
.combo svg {
    width: 6px;
    height: 6px;
}

.viewctl {
    height: 12px;
    display: flex;
    align-items: center;
    flex: none;
    padding-left: 18px;
    background: #d4d0c8;
}

.viewctl span {
    width: 34px;
    white-space: nowrap;
}

.viewctl > svg {
    width: 12px;
    height: 10px;
    margin-left: 2px;
}

.hbar {
    flex: 1;
    display: flex;
    background: #ebe9e6;
}

.viewctl .grip {
    width: 11px;
    height: 11px;
    margin-left: 0;
}

.navbar {
    position: absolute;
    top: 1px;
    right: 12px;
    border: 1px solid #ccc;
    border-radius: 3px;
    background: #f3f3f3;
}

/* properties */

.props {
    width: 152px;
    background: #d4d0c8;
    border-left: 1px solid #888;
}

.type {
    height: 50px;
    display: flex;
    align-items: center;
    flex: none;
    margin: 2px 1px 1px;
    background: linear-gradient(#fafafa, #ececec);
    text-align: left;
}

.thumb {
    width: 44px;
    height: 44px;
    display: flex;
    align-items: center;
    padding-right: 1px;
    background: #fff;
    border: 1px solid #ddd;
}

.thumb i {
    flex: 1;
    height: 8px;
    background: #999;
    border: solid #777;
    border-width: 1px 0;
}

.typename {
    flex: 1;
    padding-left: 3px;
}

.filter {
    height: 12px;
    display: flex;
    justify-content: space-between;
    flex: none;
}

.combo {
    display: flex;
    align-items: center;
    height: 12px;
    background: #fff;
    border: 1px solid #888;
}

.combo select {
    flex: 1;
    min-width: 0;
    appearance: none;
    padding-left: 2px;
}

.filter .combo {
    width: 81px;
}

.edittype {
    display: flex;
    align-items: center;
    gap: 3px;
    padding-right: 4px;
}

.sheet {
    flex: 1;
    margin-top: 1px;
    padding-right: 2px;
    background: #fff;
}

.sheet table {
    width: 100%;
    table-layout: fixed;
    border-spacing: 0;
}

.sheet .name {
    width: 74px;
}

.sheet td,
.sheet th {
    height: 10px;
    padding: 0 0 0 4px;
    border-bottom: 1px dotted #bbb;
    line-height: 9px;
    font-weight: normal;
    text-align: left;
    white-space: nowrap;
    overflow: hidden;
}

.sheet td + td {
    padding-left: 1px;
    border-left: 1px dotted #bbb;
}

.sheet th {
    padding-left: 1px;
    background: #dcdcdc;
    border-color: #dcdcdc;
}

.sheet th svg {
    width: 6px;
    height: 8px;
    float: right;
    margin-right: 2px;
}

.off {
    color: #999;
}

.sheet .focus {
    border: 1px solid #444;
    line-height: 8px;
}

.sheet input {
    display: block;
    appearance: none;
    width: 8px;
    height: 8px;
    margin-left: 1px;
    border: 1px solid #555;
    background: #fff;
}

.sheet input:checked::before {
    content: "✓";
    display: block;
    font-size: 8px;
    line-height: 6px;
    font-weight: bold;
    color: #111;
}

.sheet input:disabled {
    background: #c8c8c8;
    border-color: #888;
}

.propfoot {
    height: 15px;
    display: flex;
    align-items: center;
    justify-content: space-between;
    flex: none;
    padding: 0 2px 0 1px;
}

.propfoot a {
    color: #1a2f9a;
    text-decoration: underline;
}

.propfoot button {
    width: 49px;
    height: 14px;
    border: 1px solid #888;
    box-shadow: inset 1px 1px #fff;
    color: #999;
}

/* status bar */

.status {
    height: 19px;
    display: flex;
    align-items: center;
    padding-bottom: 3px;
    background: linear-gradient(#d4d0c8 16px, #555 16px, #555 17px, #eee 17px);
    border-top: 1px solid #999;
}

.msg {
    flex: 1;
    align-self: stretch;
    padding: 3px 1px;
    border-right: 1px solid #fff;
}

.si {
    width: 12px;
    height: 12px;
    margin: 0 3px;
}

.set {
    width: 136px;
    margin: 0 3px;
    border: 0;
}

.model {
    width: 103px;
    margin: 0 3px 0 2px;
    border: 0;
    color: #888;
}

.status .combo i {
    border-color: #fff #999 #999 #fff;
    color: #888;
}

.num {
    width: 14px;
}

.cell {
    width: 111px;
    align-self: stretch;
    border: 1px solid;
    border-color: #888 #fff #fff #888;
}

.picks {
    width: 152px;
    display: flex;
    align-items: center;
    padding-left: 2px;
}

/* message box and subtitle lie over the windows */

.dialog {
    position: absolute;
    left: 516px;
    top: 298px;
    width: 243px;
    height: 95px;
    display: flex;
    flex-direction: column;
    padding: 1px 2px 2px;
    background: #d4d0c8;
    border: 1px solid;
    border-color: #e8e6e0 #555 #555 #e8e6e0;
}

.dialog header {
    height: 12px;
    display: flex;
    align-items: center;
    justify-content: space-between;
    padding: 0 1px 0 0;
    background: linear-gradient(90deg, #0f2a70, #3a5ea8 45%, #a6caf0);
    color: #fff;
}

.dialog p {
    padding: 13px 5px 0;
    color: #222;
}

.answers {
    display: flex;
    justify-content: flex-end;
    gap: 7px;
    margin-top: auto;
    padding: 0 4px 5px;
}

.answers button {
    width: 42px;
    height: 16px;
    border: 1px solid;
    border-color: #fff #666 #666 #fff;
}

.answers .default {
    border-color: #777 #333 #333 #777;
    box-shadow: inset 1px 1px #fff, inset -1px -1px #777;
}

.cursor {
    position: absolute;
    left: 176px;
    top: 66px;
    width: 12px;
    height: 17px;
}

.caption {
    position: absolute;
    left: 50%;
    bottom: 48px;
    transform: translateX(-50%);
    padding: 0 9px;
    border-radius: 5px;
    background: rgba(64, 64, 64, .68);
    color: #1f12cf;
    font: 21px/26px "Liberation Sans", Arial, sans-serif;
    white-space: nowrap;
}
```
